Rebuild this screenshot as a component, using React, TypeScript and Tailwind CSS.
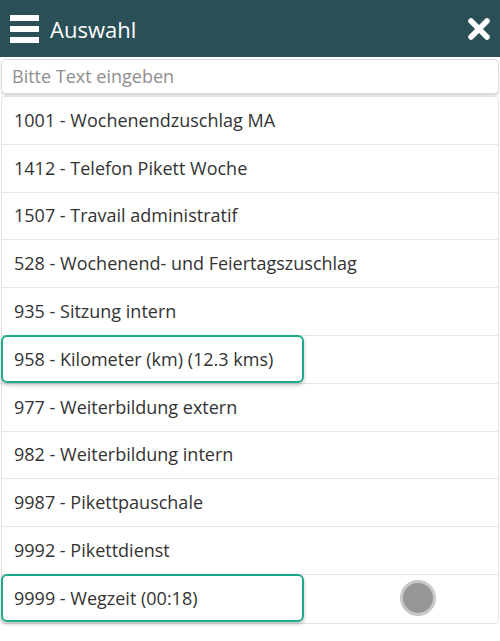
import React from 'react';

const items = [
  { label: '1001 - Wochenendzuschlag MA' },
  { label: '1412 - Telefon Pikett Woche' },
  { label: '1507 - Travail administratif' },
  { label: '528 - Wochenend- und Feiertagszuschlag' },
  { label: '935 - Sitzung intern' },
  { label: '958 - Kilometer (km) (12.3 kms)', marked: true },
  { label: '977 - Weiterbildung extern' },
  { label: '982 - Weiterbildung intern' },
  { label: '9987 - Pikettpauschale' },
  { label: '9992 - Pikettdienst' },
  { label: '9999 - Wegzeit (00:18)', marked: true, dot: true },
];

const App = () => {
  return (
    <div className="w-[500px] h-[641px] bg-white font-['Open_Sans',sans-serif] text-[#333]">
      <header className="h-[57px] bg-[#2a4f57] flex items-center justify-between pl-[10px] pr-[9px]">
        <div className="flex items-center gap-[11px]">
          <div className="flex flex-col gap-[5px] w-[29px]">
            <div className="h-[6px] bg-white"></div>
            <div className="h-[6px] bg-white"></div>
            <div className="h-[6px] bg-white"></div>
          </div>
          <span className="text-white text-[22px] leading-none">Auswahl</span>
        </div>
        <svg width="24" height="24" viewBox="0 0 24 24">
          <path d="M4 4 L20 20 M20 4 L4 20" stroke="white" strokeWidth="5.5" strokeLinecap="round" />
        </svg>
      </header>

      <div className="mx-[1px] mt-[2px] h-[35px] rounded-[5px] border border-[#dcdcdc] shadow-[0_2px_2px_rgba(0,0,0,0.15)] flex items-center px-[10px]">
        <span className="text-[18px] text-[#8e8e8e]">Bitte Text eingeben</span>
      </div>

      <ul className="mx-[1px] mt-[2px] border border-[#e2e2e2] rounded-[4px]">
        {items.map((item, index) => (
          <li
            key={index}
            className="relative h-[47.8px] flex items-center px-[12px] border-b border-[#e6e6e6] last:border-b-0 text-[18px]"
          >
            {item.marked && (
              <div className="absolute left-[-1px] top-[-1px] w-[303px] h-[48px] border-2 border-[#1fa98c] rounded-[6px] shadow-[0_2px_4px_rgba(0,0,0,0.25)]"></div>
            )}
            <span className="relative">{item.label}</span>
            {item.dot && (
              <div className="absolute left-[398px] top-[5px] w-[36px] h-[36px] rounded-full bg-[#969696] border-[3px] border-[#c8c8c8]"></div>
            )}
          </li>
        ))}
      </ul>
    </div>
  );
};

export default App;
